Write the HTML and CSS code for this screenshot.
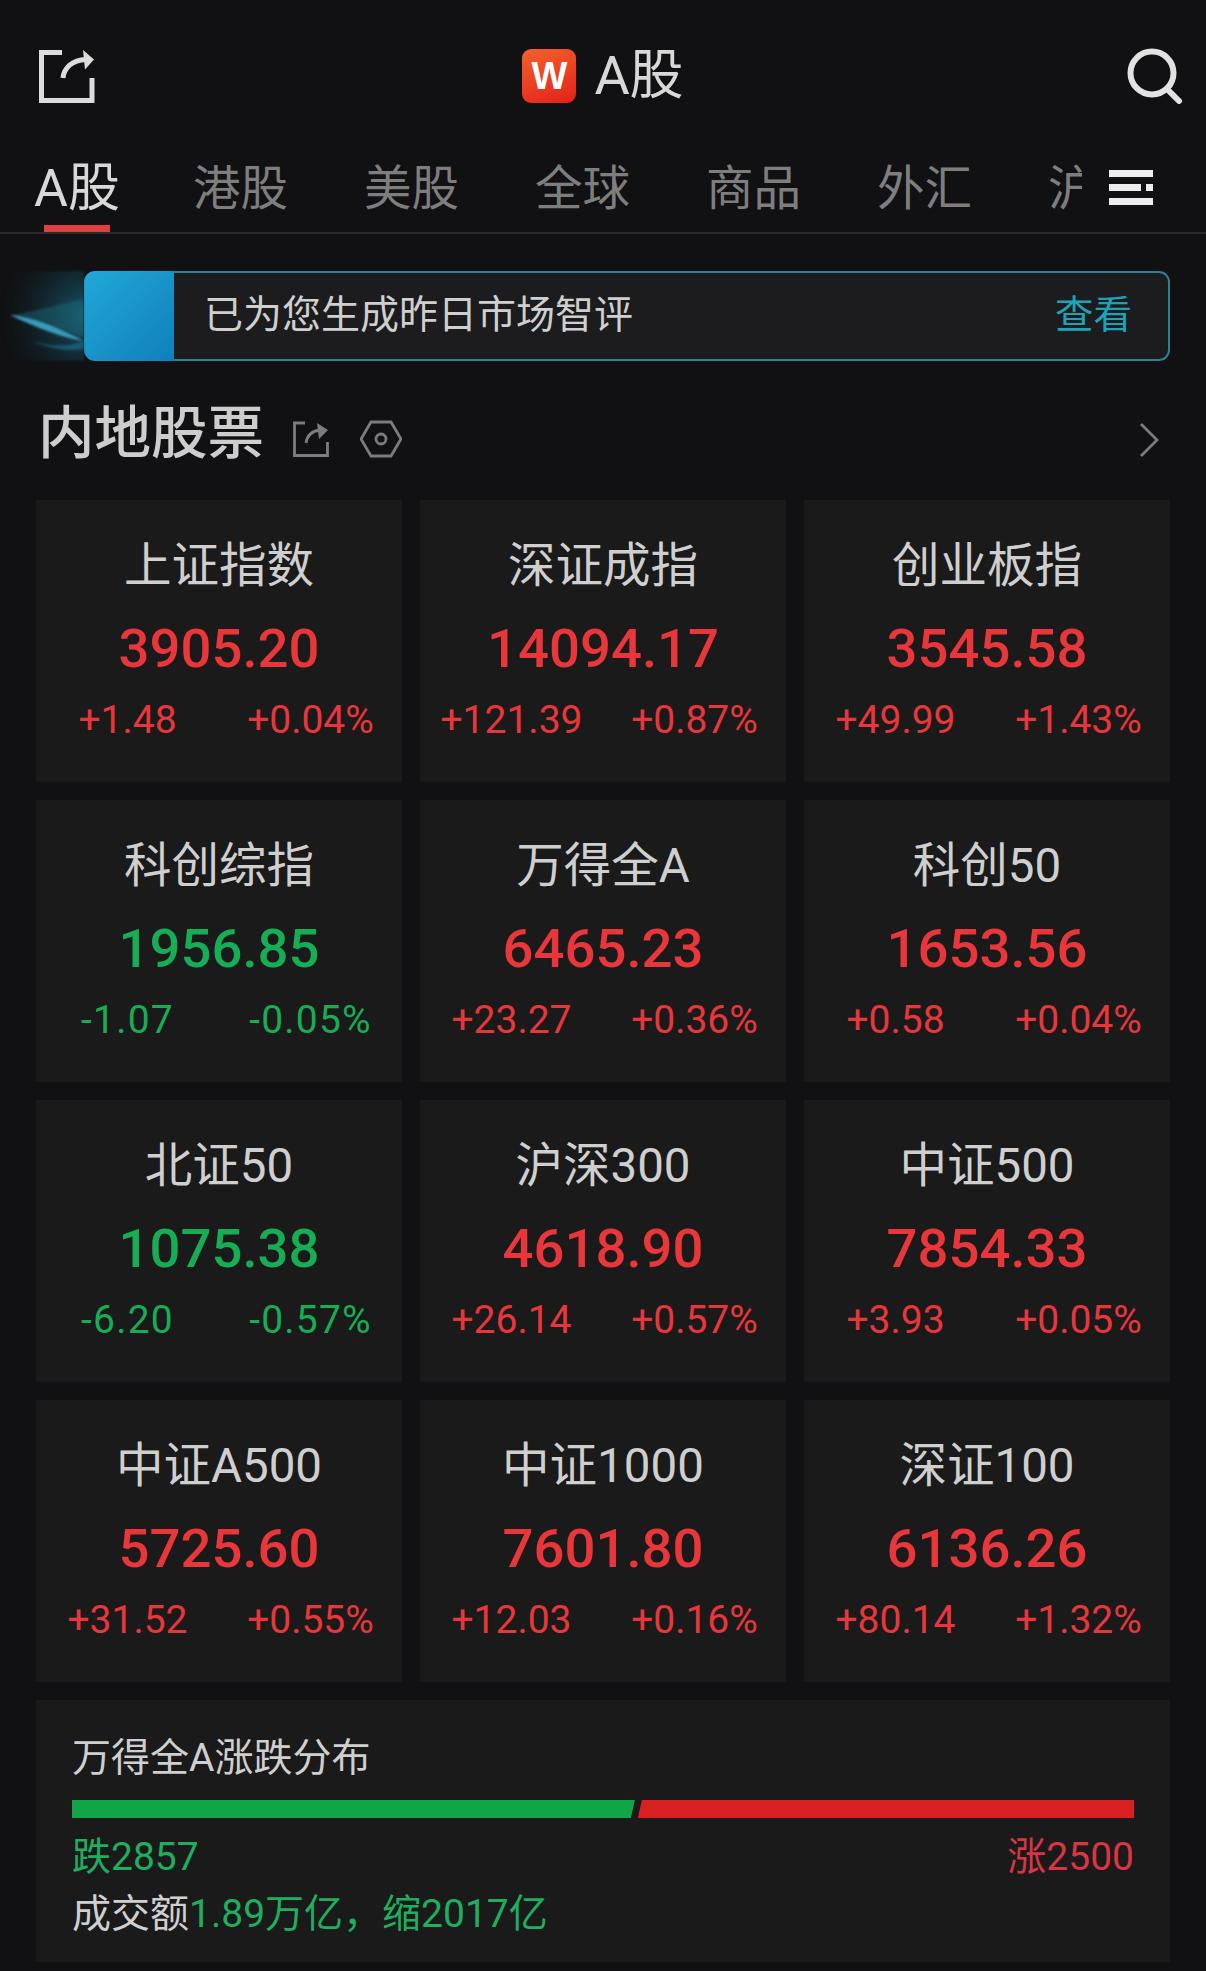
FILE: index.html
```html
<!DOCTYPE html>
<html lang="zh-CN">
<head>
<meta charset="utf-8">
<title>A股</title>
<link rel="stylesheet" href="styles.css">
</head>
<body>
<div class="page">
  <header class="topbar">
    <svg class="ico-share" viewBox="0 0 56 56" fill="none" stroke="#dcdcdc" stroke-width="5"><path d="M23 4.500H2.500V52.500H53V30"/><path d="M24 30c1-10 9-18 23-18.500"/><path d="M44 2l11 9.500-9 10z" fill="#dcdcdc" stroke="none"/></svg>
    <div class="brand"><span class="logo">W</span><span class="brand-name">A股</span></div>
    <svg class="ico-search" viewBox="0 0 56 56" fill="none" stroke="#e2e2e2" stroke-width="6"><circle cx="25" cy="25" r="21.500"/><path d="M40 41l12 12" stroke-linecap="round"/></svg>
  </header>
  <nav class="tabs">
    <div class="tab-track">
      <span class="tab active">A股</span>
      <span class="tab">港股</span>
      <span class="tab">美股</span>
      <span class="tab">全球</span>
      <span class="tab">商品</span>
      <span class="tab">外汇</span>
      <span class="tab">沪深港通</span>
    </div>
    <div class="menu"><i class="m1"></i><i class="m2"></i><i class="m3"></i></div>
  </nav>
  <section class="banner">
    <svg class="glow" viewBox="0 0 84 90"><defs><radialGradient id="g" cx="1" cy="0.5" r="1"><stop offset="0" stop-color="#1a7f9e" stop-opacity=".65"/><stop offset="1" stop-color="#0e2a35" stop-opacity="0"/></radialGradient></defs><rect width="84" height="90" fill="url(#g)"/><path d="M10 44C30 42 55 34 84 28V66C60 58 35 50 10 44z" fill="#1e7486" opacity=".4"/><path d="M10 44C35 46 60 58 84 70 60 66 35 56 10 44z" fill="#3fb0d2" opacity=".85"/><path d="M28 68C45 76 70 76 84 70V78C60 81 45 76 28 68z" fill="#1d7fa8" opacity=".5"/></svg>
    <div class="banner-tag"></div>
    <div class="banner-body"><span class="banner-text">已为您生成昨日市场智评</span><span class="banner-link">查看</span></div>
  </section>
  <section class="section-head">
    <h1 class="section-title">内地股票</h1>
    <svg class="ico-small" viewBox="0 0 36 36" fill="none" stroke="#7c7c7c" stroke-width="2.800"><path d="M12 2H1.500V34.500H34.500V21"/><path d="M13 22c1-7 6-12 14-13"/><path d="M24 2l11 7-9 9z" fill="#7c7c7c" stroke="none"/></svg>
    <svg class="ico-hex" viewBox="0 0 42 38" fill="none" stroke="#7c7c7c" stroke-width="2.800"><path d="M11 2h20l10 17-10 17H11L1 19z"/><circle cx="21" cy="19" r="5"/></svg>
    <svg class="ico-chev" viewBox="0 0 22 36" fill="none" stroke="#7a7a7a" stroke-width="2.800"><path d="M3 2l16 16L3 34"/></svg>
  </section>
  <main class="grid">
    <article class="card up"><div class="name">上证指数</div><div class="val">3905.20</div><div class="sub"><span>+1.48</span><span>+0.04%</span></div></article>
    <article class="card up"><div class="name">深证成指</div><div class="val">14094.17</div><div class="sub"><span>+121.39</span><span>+0.87%</span></div></article>
    <article class="card up"><div class="name">创业板指</div><div class="val">3545.58</div><div class="sub"><span>+49.99</span><span>+1.43%</span></div></article>
    <article class="card down"><div class="name">科创综指</div><div class="val">1956.85</div><div class="sub"><span>-1.07</span><span>-0.05%</span></div></article>
    <article class="card up"><div class="name">万得全A</div><div class="val">6465.23</div><div class="sub"><span>+23.27</span><span>+0.36%</span></div></article>
    <article class="card up"><div class="name">科创50</div><div class="val">1653.56</div><div class="sub"><span>+0.58</span><span>+0.04%</span></div></article>
    <article class="card down"><div class="name">北证50</div><div class="val">1075.38</div><div class="sub"><span>-6.20</span><span>-0.57%</span></div></article>
    <article class="card up"><div class="name">沪深300</div><div class="val">4618.90</div><div class="sub"><span>+26.14</span><span>+0.57%</span></div></article>
    <article class="card up"><div class="name">中证500</div><div class="val">7854.33</div><div class="sub"><span>+3.93</span><span>+0.05%</span></div></article>
    <article class="card up"><div class="name">中证A500</div><div class="val">5725.60</div><div class="sub"><span>+31.52</span><span>+0.55%</span></div></article>
    <article class="card up"><div class="name">中证1000</div><div class="val">7601.80</div><div class="sub"><span>+12.03</span><span>+0.16%</span></div></article>
    <article class="card up"><div class="name">深证100</div><div class="val">6136.26</div><div class="sub"><span>+80.14</span><span>+1.32%</span></div></article>
  </main>
  <section class="dist">
    <div class="dist-title">万得全A涨跌分布</div>
    <div class="bar"><div class="bar-down" style="width:53%"></div><div class="bar-up"></div></div>
    <div class="counts"><span class="g">跌2857</span><span class="r">涨2500</span></div>
    <div class="volume">成交额<span class="g">1.89万亿，缩2017亿</span></div>
  </section>
</div>
</body>
</html>
```
FILE: styles.css
```css
* { box-sizing: border-box; }
html, body { margin: 0; background: #111113; }
body { font-family: Roboto, "Noto Sans CJK SC", sans-serif; color: #d2d2d2; }
.page { width: 1206px; height: 1971px; overflow: hidden; }

.topbar { display: grid; grid-template-columns: 1fr auto 1fr; align-items: center; height: 125px; padding: 48px 39px 22px 39px; }
.ico-share { width: 56px; height: 56px; }
.ico-search { width: 56px; height: 56px; justify-self: end; margin-right: -16px; }
.brand { display: flex; align-items: center; gap: 18px; }
.logo { width: 54px; height: 54px; border-radius: 9px; background: linear-gradient(160deg, #f2622c, #e3211a); color: #fff; font: 700 38px/54px "Liberation Sans", sans-serif; text-align: center; }
.brand-name { font-size: 54px; line-height: 56px; color: #d8d8d8; }

.tabs { display: flex; align-items: center; height: 109px; border-bottom: 2px solid #2a2a2c; }
.tab-track { width: 1082px; display: flex; gap: 76px; padding-left: 34px; overflow: hidden; padding-top: 17px; height: 107px; line-height: 94px; }
.tab { position: relative; flex: none; font-size: 47.500px; color: #7e7e7e; height: 90px; }
.tab.active { color: #d8d8d8; font-size: 52px; margin-right: -3px; }
.tab.active::after { content: ""; position: absolute; left: 10px; right: 10px; bottom: 0; height: 7px; background: #df4040; }
.menu { width: 44px; margin: 17px 0 0 27px; display: flex; flex-direction: column; gap: 7px; }
.menu i { display: block; height: 7px; background: #ededed; }
.menu .m2 { background: linear-gradient(90deg, #ededed 0 72%, transparent 72% 84%, #ededed 84%); }

.banner { position: relative; display: flex; height: 90px; margin: 37px 36px 0 84px; }
.glow { position: absolute; left: -84px; top: 0; width: 84px; height: 90px; filter: blur(1px); }
.banner-tag { width: 90px; border-radius: 11px 0 0 11px; background: linear-gradient(135deg, #22a8d8, #0f7fba); }
.banner-body { flex: 1; display: flex; justify-content: space-between; align-items: center; padding: 0 36px 10px 30px; background: #1c1c1e; border: 2px solid #2a8293; border-left: 0; border-radius: 0 11px 11px 0; }
.banner-text { font-size: 39px; color: #cfcfcf; }
.banner-link { font-size: 38.500px; color: #1ea2b6; }

.section-head { display: flex; align-items: center; height: 139px; padding: 7px 46px 0 38px; }
.section-title { margin: 0; font-size: 56.500px; font-weight: 500; color: #cdcdcd; line-height: 64px; }
.ico-small { width: 36px; height: 36px; margin: 10px 0 0 29px; }
.ico-hex { width: 42px; height: 38px; margin: 9px 0 0 31px; }
.ico-chev { width: 22px; height: 36px; margin: 12px 0 0 auto; }

.grid { display: grid; grid-template-columns: repeat(3, 366px); grid-auto-rows: 282px; column-gap: 18px; row-gap: 18px; padding: 0 36px; }
.card { background: #1a1a1b; padding-top: 36px; text-align: center; }
.name { font-size: 47.500px; line-height: 60px; color: #cfcfcf; }
.val { margin-top: 17px; font-size: 54.500px; line-height: 70px; font-weight: 500; }
.sub { display: grid; grid-template-columns: 1fr 1fr; margin-top: 12px; font-size: 39px; line-height: 50px; }
.up .val, .up .sub { color: #e8363b; }
.down .val, .down .sub { color: #17ad55; }
.down .sub { letter-spacing: 1.200px; }

.dist { height: 262px; margin: 18px 36px 0; padding: 33px 36px 0; background: #1a1a1b; }
.dist-title { font-size: 39px; line-height: 50px; color: #cfcfcf; }
.bar { display: flex; gap: 3px; height: 18px; margin-top: 17px; }
.bar-down { background: #12a548; clip-path: polygon(0 0, 100% 0, calc(100% - 4px) 100%, 0 100%); }
.bar-up { flex: 1; background: #d81f22; clip-path: polygon(4px 0, 100% 0, 100% 100%, 0 100%); }
.counts { display: flex; justify-content: space-between; margin-top: 14px; font-size: 39px; line-height: 50px; }
.g { color: #1fae5e; }
.r { color: #d93543; }
.volume { margin-top: 7px; font-size: 39px; line-height: 50px; color: #cfcfcf; }
```
